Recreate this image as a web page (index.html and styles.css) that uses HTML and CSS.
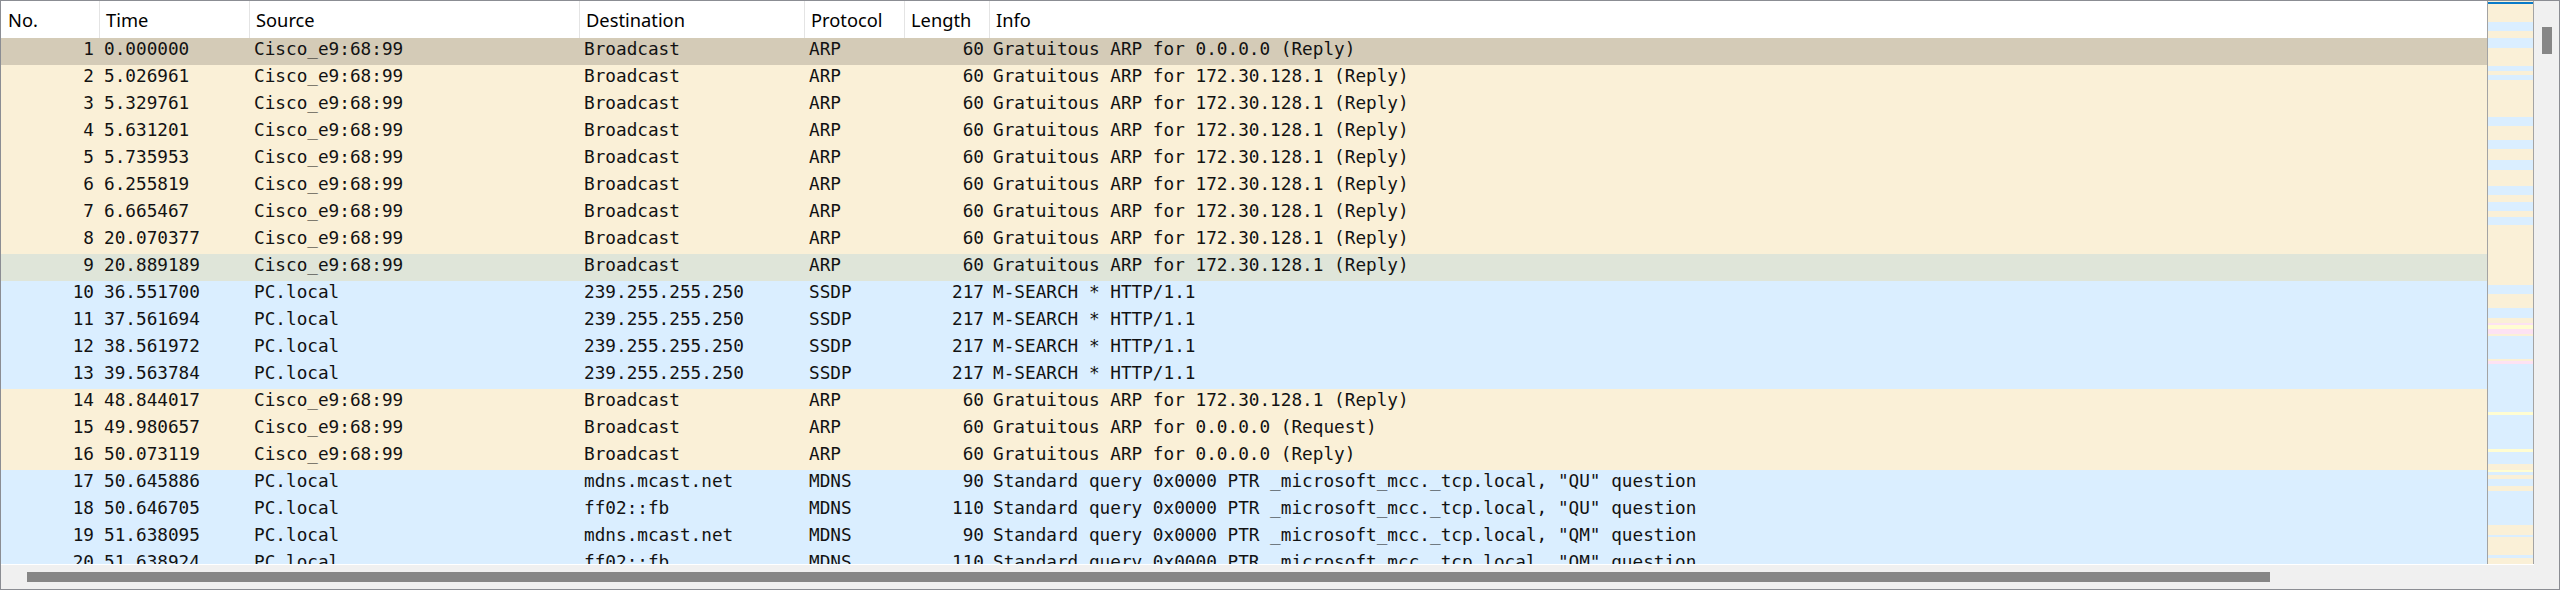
FILE: index.html
```html
<!DOCTYPE html>
<html lang="en">
<head>
<meta charset="utf-8">
<title>Packet list</title>
<link rel="stylesheet" href="styles.css">
</head>
<body>
<div class="pane">
  <div class="table">
    <div class="head">
      <div class="h">No.</div>
      <div class="h">Time</div>
      <div class="h">Source</div>
      <div class="h">Destination</div>
      <div class="h">Protocol</div>
      <div class="h">Length</div>
      <div class="h">Info</div>
    </div>
    <div class="row sel"><span class="r">1</span><span>0.000000</span><span>Cisco_e9:68:99</span><span>Broadcast</span><span>ARP</span><span class="r">60</span><span>Gratuitous ARP for 0.0.0.0 (Reply)</span></div>
    <div class="row arp"><span class="r">2</span><span>5.026961</span><span>Cisco_e9:68:99</span><span>Broadcast</span><span>ARP</span><span class="r">60</span><span>Gratuitous ARP for 172.30.128.1 (Reply)</span></div>
    <div class="row arp"><span class="r">3</span><span>5.329761</span><span>Cisco_e9:68:99</span><span>Broadcast</span><span>ARP</span><span class="r">60</span><span>Gratuitous ARP for 172.30.128.1 (Reply)</span></div>
    <div class="row arp"><span class="r">4</span><span>5.631201</span><span>Cisco_e9:68:99</span><span>Broadcast</span><span>ARP</span><span class="r">60</span><span>Gratuitous ARP for 172.30.128.1 (Reply)</span></div>
    <div class="row arp"><span class="r">5</span><span>5.735953</span><span>Cisco_e9:68:99</span><span>Broadcast</span><span>ARP</span><span class="r">60</span><span>Gratuitous ARP for 172.30.128.1 (Reply)</span></div>
    <div class="row arp"><span class="r">6</span><span>6.255819</span><span>Cisco_e9:68:99</span><span>Broadcast</span><span>ARP</span><span class="r">60</span><span>Gratuitous ARP for 172.30.128.1 (Reply)</span></div>
    <div class="row arp"><span class="r">7</span><span>6.665467</span><span>Cisco_e9:68:99</span><span>Broadcast</span><span>ARP</span><span class="r">60</span><span>Gratuitous ARP for 172.30.128.1 (Reply)</span></div>
    <div class="row arp"><span class="r">8</span><span>20.070377</span><span>Cisco_e9:68:99</span><span>Broadcast</span><span>ARP</span><span class="r">60</span><span>Gratuitous ARP for 172.30.128.1 (Reply)</span></div>
    <div class="row hov"><span class="r">9</span><span>20.889189</span><span>Cisco_e9:68:99</span><span>Broadcast</span><span>ARP</span><span class="r">60</span><span>Gratuitous ARP for 172.30.128.1 (Reply)</span></div>
    <div class="row udp"><span class="r">10</span><span>36.551700</span><span>PC.local</span><span>239.255.255.250</span><span>SSDP</span><span class="r">217</span><span>M-SEARCH * HTTP/1.1</span></div>
    <div class="row udp"><span class="r">11</span><span>37.561694</span><span>PC.local</span><span>239.255.255.250</span><span>SSDP</span><span class="r">217</span><span>M-SEARCH * HTTP/1.1</span></div>
    <div class="row udp"><span class="r">12</span><span>38.561972</span><span>PC.local</span><span>239.255.255.250</span><span>SSDP</span><span class="r">217</span><span>M-SEARCH * HTTP/1.1</span></div>
    <div class="row udp"><span class="r">13</span><span>39.563784</span><span>PC.local</span><span>239.255.255.250</span><span>SSDP</span><span class="r">217</span><span>M-SEARCH * HTTP/1.1</span></div>
    <div class="row arp"><span class="r">14</span><span>48.844017</span><span>Cisco_e9:68:99</span><span>Broadcast</span><span>ARP</span><span class="r">60</span><span>Gratuitous ARP for 172.30.128.1 (Reply)</span></div>
    <div class="row arp"><span class="r">15</span><span>49.980657</span><span>Cisco_e9:68:99</span><span>Broadcast</span><span>ARP</span><span class="r">60</span><span>Gratuitous ARP for 0.0.0.0 (Request)</span></div>
    <div class="row arp"><span class="r">16</span><span>50.073119</span><span>Cisco_e9:68:99</span><span>Broadcast</span><span>ARP</span><span class="r">60</span><span>Gratuitous ARP for 0.0.0.0 (Reply)</span></div>
    <div class="row udp"><span class="r">17</span><span>50.645886</span><span>PC.local</span><span>mdns.mcast.net</span><span>MDNS</span><span class="r">90</span><span>Standard query 0x0000 PTR _microsoft_mcc._tcp.local, "QU" question</span></div>
    <div class="row udp"><span class="r">18</span><span>50.646705</span><span>PC.local</span><span>ff02::fb</span><span>MDNS</span><span class="r">110</span><span>Standard query 0x0000 PTR _microsoft_mcc._tcp.local, "QU" question</span></div>
    <div class="row udp"><span class="r">19</span><span>51.638095</span><span>PC.local</span><span>mdns.mcast.net</span><span>MDNS</span><span class="r">90</span><span>Standard query 0x0000 PTR _microsoft_mcc._tcp.local, "QM" question</span></div>
    <div class="row udp"><span class="r">20</span><span>51.638924</span><span>PC.local</span><span>ff02::fb</span><span>MDNS</span><span class="r">110</span><span>Standard query 0x0000 PTR _microsoft_mcc._tcp.local, "QM" question</span></div>
  </div>
  <div class="minimap">
    <i class="t" style="height:1px"></i><i class="s" style="height:2px"></i><i class="t" style="height:18px"></i><i class="b" style="height:9px"></i><i class="t" style="height:7px"></i><i class="b" style="height:10px"></i><i class="t" style="height:18px"></i><i class="b" style="height:5px"></i><i class="t" style="height:4px"></i><i class="b" style="height:5px"></i><i class="t" style="height:37px"></i><i class="b" style="height:9px"></i><i class="t" style="height:14px"></i><i class="b" style="height:9px"></i><i class="t" style="height:11px"></i><i class="b" style="height:10px"></i><i class="t" style="height:16px"></i><i class="b" style="height:9px"></i><i class="t" style="height:7px"></i><i class="b" style="height:9px"></i><i class="t" style="height:6px"></i><i class="b" style="height:8px"></i><i class="t" style="height:60px"></i><i class="b" style="height:9px"></i><i class="t" style="height:14px"></i><i class="b" style="height:10px"></i><i class="t" style="height:5px"></i><i class="p" style="height:2px"></i><i class="y" style="height:4px"></i><i class="p" style="height:5px"></i><i class="t" style="height:2px"></i><i class="b" style="height:23px"></i><i class="t" style="height:2px"></i><i class="p" style="height:3px"></i><i class="b" style="height:48px"></i><i class="y" style="height:3px"></i><i class="b" style="height:34px"></i><i class="y" style="height:3px"></i><i class="b" style="height:12px"></i><i class="t" style="height:6px"></i><i class="y" style="height:2px"></i><i class="b" style="height:3px"></i><i class="t" style="height:4px"></i><i class="b" style="height:7px"></i><i class="t" style="height:5px"></i><i class="b" style="height:34px"></i><i class="t" style="height:10px"></i><i class="b" style="height:2px"></i><i class="t" style="height:18px"></i><i class="b" style="height:3px"></i><i class="t" style="height:6px"></i>
  </div>
  <div class="vscroll"><div class="vthumb"></div></div>
  <div class="hscroll"><div class="hthumb"></div></div>
</div>
</body>
</html>
```

FILE: styles.css
```css
* { box-sizing: border-box; }
html, body { margin: 0; padding: 0; background: #ffffff; }

.pane {
  width: 2560px;
  height: 590px;
  border: 1px solid #8b8d93;
  display: grid;
  grid-template-columns: 2486px 47px 25px;
  grid-template-rows: 563px 25px;
  background: #f0f0f0;
}

.table {
  grid-column: 1;
  grid-row: 1;
  overflow: hidden;
  background: #ffffff;
  font-family: "DejaVu Sans Mono", monospace;
  font-size: 17.72px;
  color: #121212;
}

.head, .row {
  display: grid;
  grid-template-columns: 98px 150px 330px 225px 100px 85px 1fr;
}

.head {
  height: 37px;
  background: #ffffff;
  font-family: "Noto Sans", sans-serif;
  font-size: 18.3px;
  line-height: 37px;
  color: #000000;
}

.h {
  padding-left: 7px;
  white-space: nowrap;
}
.h + .h {
  border-left: 1px solid #e4e4e4;
  padding-left: 6px;
}

.row {
  height: 27px;
  line-height: 23px;
  white-space: nowrap;
}
.row span {
  padding: 0 5px;
  overflow: hidden;
}
.row span.r { text-align: right; }
.row span:last-child { padding-left: 4px; }

.sel { background: #d4cbb7; }
.arp { background: #faf0d7; }
.hov { background: #dfe5d9; }
.udp { background: #daeeff; }

.minimap {
  grid-column: 2;
  grid-row: 1;
  display: flex;
  flex-direction: column;
  border-left: 1px solid #a3a3a3;
  border-right: 1px solid #a3a3a3;
  background: #faf0d7;
  overflow: hidden;
}
.minimap i { display: block; flex: none; }
.minimap .t { background: #faf0d7; }
.minimap .b { background: #daeeff; }
.minimap .s { background: #0a7bc9; }
.minimap .p { background: #fde2f3; }
.minimap .y { background: #fffdd2; }

.vscroll {
  grid-column: 3;
  grid-row: 1 / 3;
  background: #f0f0f0;
  padding: 26px 0 0 8px;
}
.vthumb {
  width: 10px;
  height: 27px;
  background: #868686;
}

.hscroll {
  grid-column: 1 / 3;
  grid-row: 2;
  background: #f0f0f0;
  border-top: 1px solid #ffffff;
  padding: 7px 0 0 26px;
}
.hthumb {
  width: 2243px;
  height: 10px;
  background: #868686;
}
```
